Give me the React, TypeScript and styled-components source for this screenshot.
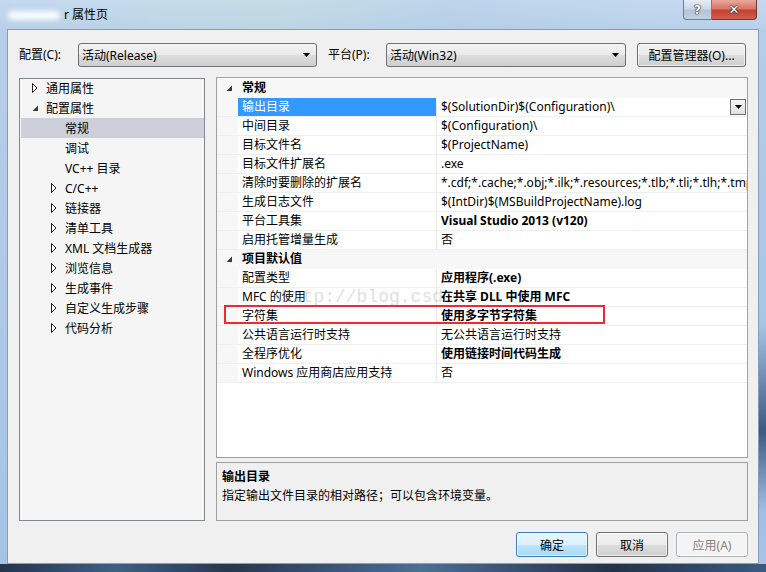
import React from "react";
import styled, { createGlobalStyle } from "styled-components";

const Global = createGlobalStyle`
  html, body { margin: 0; padding: 0; }
  body {
    font-family: "Noto Sans", "Noto Sans CJK SC", sans-serif;
    font-size: 12px;
    color: #000;
  }
  * { box-sizing: border-box; }
`;

const FONT = `"Noto Sans", "Noto Sans CJK SC", sans-serif`;

const Window = styled.div`
  width: 766px;
  height: 572px;
  display: flex;
  flex-direction: column;
  overflow: hidden;
  background:
    linear-gradient(90deg, rgba(255,255,255,0) 0, rgba(200,225,210,0.35) 35%, rgba(170,200,225,0.25) 60%, rgba(255,255,255,0) 85%),
    linear-gradient(180deg, #c4d9ef 0, #b8d0ea 30px, #aac6e5 100%);
  font-family: ${FONT};
`;

const TitleBar = styled.div`
  height: 29px;
  display: flex;
  justify-content: space-between;
  align-items: flex-start;
  padding: 0 9px 0 8px;
  flex: none;
`;

const Title = styled.div`
  margin-top: 7px;
  display: flex;
  align-items: center;
  font-size: 12px;
  line-height: 16px;
`;

const BlurredPatch = styled.span`
  display: inline-block;
  width: 52px;
  height: 9px;
  margin-right: 4px;
  border-radius: 4px;
  background: rgba(255, 255, 255, 0.9);
  filter: blur(2.5px);
`;

const CaptionGroup = styled.div`
  display: flex;
`;

const CaptionButton = styled.div<{ $close?: boolean }>`
  width: ${(p) => (p.$close ? 45 : 29)}px;
  height: 20px;
  display: flex;
  align-items: center;
  justify-content: center;
  border: 1px solid ${(p) => (p.$close ? "#6b3a35" : "#6f7e92")};
  border-top: none;
  border-radius: ${(p) => (p.$close ? "0 0 4px 0" : "0 0 0 4px")};
  ${(p) => (p.$close ? "border-left: none;" : "")}
  background: ${(p) =>
    p.$close
      ? "linear-gradient(180deg, #e9a99c 0, #d9786a 45%, #c4412f 55%, #d3604c 100%)"
      : "linear-gradient(180deg, #e6eef7 0, #cbd8e7 45%, #b3c4d8 55%, #c4d3e3 100%)"};
  color: #fff;
  font-weight: bold;
  font-family: "DejaVu Sans", sans-serif;
  font-size: ${(p) => (p.$close ? 13 : 12)}px;
  text-shadow: 0 0 1px #2a2a2a, 0 0 1px #2a2a2a, 0 0 2px #333;
`;

const Body = styled.div`
  flex: 1;
  display: flex;
  min-height: 0;
`;

const SideEdge = styled.div<{ $right?: boolean }>`
  width: 7px;
  flex: none;
  background: ${(p) =>
    p.$right
      ? "linear-gradient(180deg, #b4cde8 0, #a9c6e6 55%, #3b5a80 75%, #9fc0e4 90%, #a6c4e6 100%)"
      : "linear-gradient(180deg, #b6cee9 0, #a7c4e4 100%)"};
`;

const Client = styled.div`
  flex: 1;
  background: #f0f0f0;
  border: 1px solid #8a9bb2;
  display: flex;
  flex-direction: column;
  padding: 0 10px 6px 11px;
`;

const BottomEdge = styled.div`
  height: 8px;
  flex: none;
  background: linear-gradient(90deg, #23344c 0, #3f5f86 15%, #26374f 30%, #4d6e95 55%, #223148 80%, #3a5a80 100%);
`;

const TopRow = styled.div`
  margin-top: 13px;
  height: 24px;
  display: flex;
  align-items: center;
`;

const Label = styled.div<{ $w: number }>`
  width: ${(p) => p.$w}px;
  flex: none;
  line-height: 24px;
`;

const Combo = styled.div<{ $w: number }>`
  width: ${(p) => p.$w}px;
  height: 24px;
  flex: none;
  border: 1px solid #707070;
  border-radius: 3px;
  background: linear-gradient(180deg, #f2f2f2 0, #ebebeb 50%, #dddddd 51%, #cfcfcf 100%);
  display: flex;
  align-items: center;
  justify-content: space-between;
  padding: 0 6px 0 3px;
  margin-right: 11px;
`;

const WinButton = styled.div<{ $w: number; $h: number; $variant?: "default" | "disabled" }>`
  width: ${(p) => p.$w}px;
  height: ${(p) => p.$h}px;
  flex: none;
  border: 1px solid
    ${(p) => (p.$variant === "default" ? "#3c7fb1" : p.$variant === "disabled" ? "#adb2b5" : "#707070")};
  border-radius: 3px;
  background: ${(p) =>
    p.$variant === "default"
      ? "linear-gradient(180deg, #eaf6fd 0, #d9f0fc 50%, #bee6fd 51%, #a7d9f5 100%)"
      : p.$variant === "disabled"
      ? "#f4f4f4"
      : "linear-gradient(180deg, #f2f2f2 0, #ebebeb 50%, #dddddd 51%, #cfcfcf 100%)"};
  box-shadow: inset 0 0 0 1px rgba(255, 255, 255, 0.65);
  color: ${(p) => (p.$variant === "disabled" ? "#838383" : "#000")};
  display: flex;
  align-items: center;
  justify-content: center;
`;

const Main = styled.div`
  margin-top: 10px;
  height: 444px;
  display: flex;
  gap: 11px;
`;

const Tree = styled.div`
  width: 186px;
  flex: none;
  margin-top: 1px;
  background: #f5f5f5;
  border: 1px solid #828790;
  padding-top: 0;
`;

const TreeRow = styled.div<{ $level: number; $selected?: boolean }>`
  height: 20px;
  margin-top: -1px;
  margin-bottom: 1px;
  display: flex;
  align-items: center;
  padding-left: ${(p) => 11 + p.$level * 19}px;
  margin-left: 1px;
  background: ${(p) => (p.$selected ? "#cdcfdb" : "transparent")};
  white-space: nowrap;
`;

const ArrowBox = styled.span`
  width: 14px;
  flex: none;
  display: flex;
  align-items: center;
`;

const RightCol = styled.div`
  flex: 1;
  display: flex;
  flex-direction: column;
  gap: 4px;
  min-width: 0;
`;

const Grid = styled.div`
  position: relative;
  height: 381px;
  flex: none;
  background: #fff;
  border: 1px solid #a0a0a0;
  padding-top: 1px;
  overflow: hidden;
`;

const GridRow = styled.div<{ $header?: boolean }>`
  position: relative;
  height: 19px;
  display: grid;
  grid-template-columns: 21px 199px 1fr;
  background: ${(p) => (p.$header ? "#f7f7f7" : "#fff")};
  border-bottom: 1px solid ${(p) => (p.$header ? "#f7f7f7" : "#efefef")};
`;

const Gutter = styled.div`
  background: #f7f7f7;
  display: flex;
  align-items: center;
  padding-left: 9px;
`;

const HeaderText = styled.div`
  grid-column: 2 / 4;
  font-weight: bold;
  padding-left: 4px;
  line-height: 18px;
`;

const NameCell = styled.div<{ $selected?: boolean }>`
  padding-left: 4px;
  line-height: 18px;
  white-space: nowrap;
  overflow: hidden;
  border-right: 1px solid #e8e8e8;
  background: ${(p) => (p.$selected ? "#3399ff" : "transparent")};
  color: ${(p) => (p.$selected ? "#fff" : "#000")};
`;

const ValueCell = styled.div<{ $bold?: boolean }>`
  position: relative;
  padding-left: 4px;
  line-height: 18px;
  white-space: nowrap;
  overflow: hidden;
  font-weight: ${(p) => (p.$bold ? "bold" : "normal")};
`;

const DropBtn = styled.div`
  position: absolute;
  right: 1px;
  top: 1px;
  width: 16px;
  height: 16px;
  border: 1px solid #707070;
  background: linear-gradient(180deg, #f4f4f4 0, #e2e2e2 100%);
  display: flex;
  align-items: center;
  justify-content: center;
`;

const RedBox = styled.div`
  position: absolute;
  left: 7px;
  top: -2px;
  width: 381px;
  height: 19px;
  border: 2px solid #ec2a2f;
  pointer-events: none;
`;

const Watermark = styled.div`
  position: absolute;
  left: 64px;
  top: 209px;
  font-family: "Liberation Mono", monospace;
  font-size: 18px;
  line-height: 20px;
  color: rgba(120, 120, 120, 0.25);
  pointer-events: none;
  white-space: nowrap;
`;

const Desc = styled.div`
  flex: 1;
  border: 1px solid #a0a0a0;
  background: #f0f0f0;
  padding: 4px 5px;
  line-height: 19px;
`;

const DescTitle = styled.div`
  font-weight: bold;
`;

const ButtonRow = styled.div`
  margin-top: 11px;
  display: flex;
  justify-content: flex-end;
  gap: 8px;
`;

const Collapsed = () => (
  <svg width="6" height="10" viewBox="0 0 6 10">
    <polygon points="0.5,0.5 5,5 0.5,9.5" fill="#fff" stroke="#1e1e1e" strokeWidth="1" />
  </svg>
);

const Expanded = () => (
  <svg width="7" height="7" viewBox="0 0 7 7">
    <polygon points="6,0.5 6,6 0.5,6" fill="#3b3b3b" />
  </svg>
);

const DownArrow = ({ w = 7 }: { w?: number }) => (
  <svg width={w} height={4} viewBox={`0 0 ${w} 4`}>
    <polygon points={`0,0 ${w},0 ${w / 2},4`} fill="#000" />
  </svg>
);

type TreeItem = { text: string; level: number; arrow?: "c" | "e"; selected?: boolean };

const tree: TreeItem[] = [
  { text: "通用属性", level: 0, arrow: "c" },
  { text: "配置属性", level: 0, arrow: "e" },
  { text: "常规", level: 1, selected: true },
  { text: "调试", level: 1 },
  { text: "VC++ 目录", level: 1 },
  { text: "C/C++", level: 1, arrow: "c" },
  { text: "链接器", level: 1, arrow: "c" },
  { text: "清单工具", level: 1, arrow: "c" },
  { text: "XML 文档生成器", level: 1, arrow: "c" },
  { text: "浏览信息", level: 1, arrow: "c" },
  { text: "生成事件", level: 1, arrow: "c" },
  { text: "自定义生成步骤", level: 1, arrow: "c" },
  { text: "代码分析", level: 1, arrow: "c" },
];

type Prop = { name: string; value: string; bold?: boolean; selected?: boolean; mark?: boolean };
type Section = { title: string; props: Prop[] };

const sections: Section[] = [
  {
    title: "常规",
    props: [
      { name: "输出目录", value: "$(SolutionDir)$(Configuration)\\", selected: true },
      { name: "中间目录", value: "$(Configuration)\\" },
      { name: "目标文件名", value: "$(ProjectName)" },
      { name: "目标文件扩展名", value: ".exe" },
      {
        name: "清除时要删除的扩展名",
        value: "*.cdf;*.cache;*.obj;*.ilk;*.resources;*.tlb;*.tli;*.tlh;*.tmp;*.rsp;*.pgc;*.pgd;*.meta;*.tlog;*.manifest",
      },
      { name: "生成日志文件", value: "$(IntDir)$(MSBuildProjectName).log" },
      { name: "平台工具集", value: "Visual Studio 2013 (v120)", bold: true },
      { name: "启用托管增量生成", value: "否" },
    ],
  },
  {
    title: "项目默认值",
    props: [
      { name: "配置类型", value: "应用程序(.exe)", bold: true },
      { name: "MFC 的使用", value: "在共享 DLL 中使用 MFC", bold: true },
      { name: "字符集", value: "使用多字节字符集", bold: true, mark: true },
      { name: "公共语言运行时支持", value: "无公共语言运行时支持" },
      { name: "全程序优化", value: "使用链接时间代码生成", bold: true },
      { name: "Windows 应用商店应用支持", value: "否" },
    ],
  },
];

export default function App() {
  return (
    <>
      <Global />
      <Window>
        <TitleBar>
          <Title>
            <BlurredPatch />
            <span>r 属性页</span>
          </Title>
          <CaptionGroup>
            <CaptionButton>?</CaptionButton>
            <CaptionButton $close>✕</CaptionButton>
          </CaptionGroup>
        </TitleBar>
        <Body>
          <SideEdge />
          <Client>
            <TopRow>
              <Label $w={59}>配置(C):</Label>
              <Combo $w={239}>
                <span>活动(Release)</span>
                <DownArrow />
              </Combo>
              <Label $w={58}>平台(P):</Label>
              <Combo $w={240}>
                <span>活动(Win32)</span>
                <DownArrow />
              </Combo>
              <WinButton $w={109} $h={24}>配置管理器(O)...</WinButton>
            </TopRow>
            <Main>
              <Tree>
                {tree.map((t) => (
                  <TreeRow key={t.text} $level={t.level} $selected={t.selected}>
                    <ArrowBox>{t.arrow === "c" ? <Collapsed /> : t.arrow === "e" ? <Expanded /> : null}</ArrowBox>
                    <span>{t.text}</span>
                  </TreeRow>
                ))}
              </Tree>
              <RightCol>
                <Grid>
                  {sections.map((s) => (
                    <React.Fragment key={s.title}>
                      <GridRow $header>
                        <Gutter>
                          <Expanded />
                        </Gutter>
                        <HeaderText>{s.title}</HeaderText>
                      </GridRow>
                      {s.props.map((p) => (
                        <GridRow key={p.name}>
                          <Gutter />
                          <NameCell $selected={p.selected}>{p.name}</NameCell>
                          <ValueCell $bold={p.bold}>
                            {p.value}
                            {p.selected && (
                              <DropBtn>
                                <DownArrow w={7} />
                              </DropBtn>
                            )}
                          </ValueCell>
                          {p.mark && <RedBox />}
                        </GridRow>
                      ))}
                    </React.Fragment>
                  ))}
                  <Watermark>http://blog.csd</Watermark>
                </Grid>
                <Desc>
                  <DescTitle>输出目录</DescTitle>
                  <div>指定输出文件目录的相对路径；可以包含环境变量。</div>
                </Desc>
              </RightCol>
            </Main>
            <ButtonRow>
              <WinButton $w={72} $h={25} $variant="default">确定</WinButton>
              <WinButton $w={72} $h={25}>取消</WinButton>
              <WinButton $w={72} $h={25} $variant="disabled">应用(A)</WinButton>
            </ButtonRow>
          </Client>
          <SideEdge $right />
        </Body>
        <BottomEdge />
      </Window>
    </>
  );
}
